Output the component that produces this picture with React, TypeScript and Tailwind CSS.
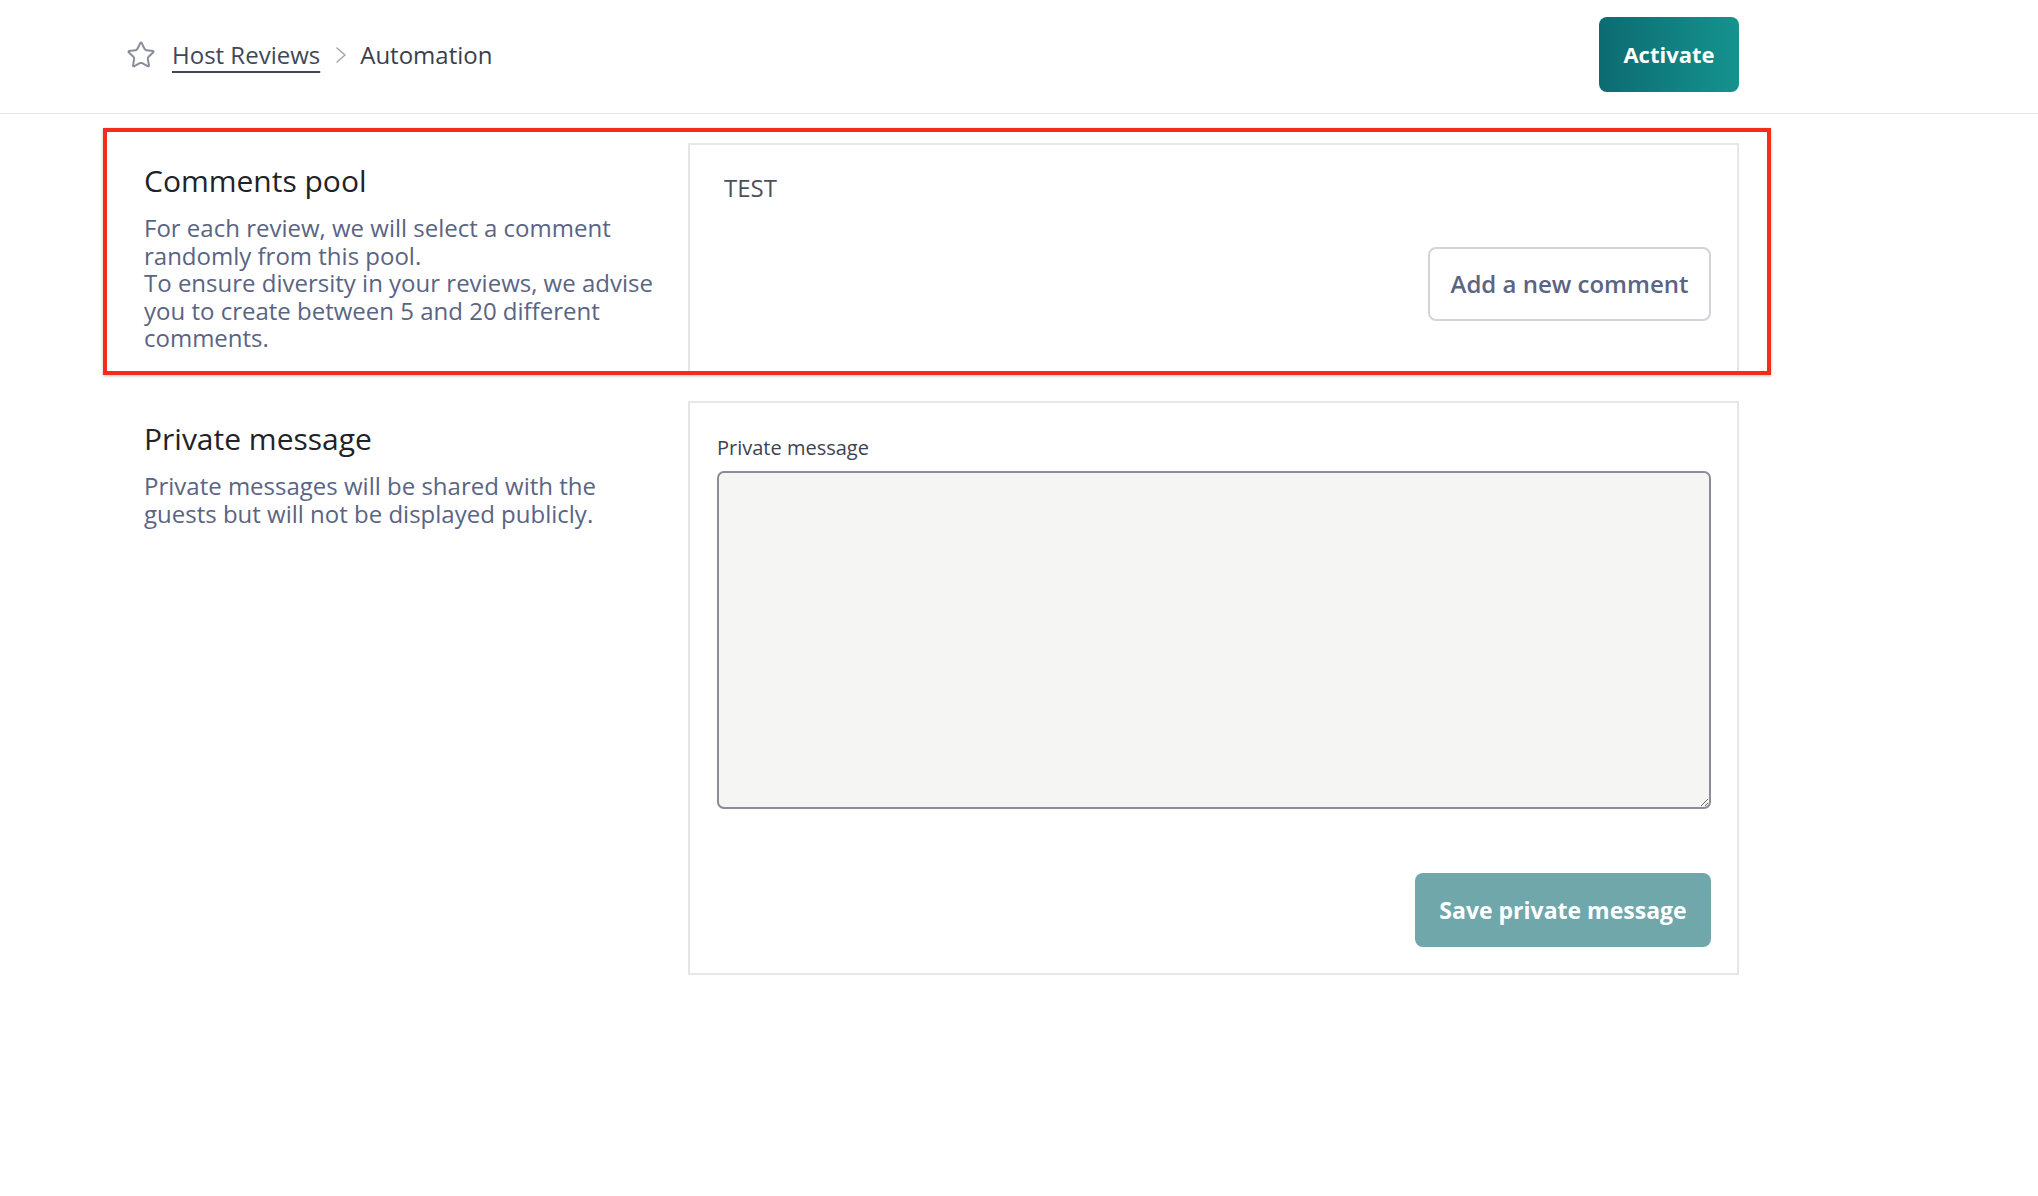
import { Star } from "lucide-react";

function Chevron() {
  return (
    <svg width="14" height="20" viewBox="0 0 14 20" fill="none" className="shrink-0">
      <polyline points="3,3 11,10 3,17" stroke="#a3a7b1" strokeWidth="1.6" strokeLinejoin="round" strokeLinecap="round" />
    </svg>
  );
}

function SectionIntro({ title, children }: { title: string; children: React.ReactNode }) {
  return (
    <div className="w-[562px] shrink-0 pl-[18px] pr-[28px] pt-[18px]">
      <h2 className="text-[30px] leading-[40px] text-[#1f2227]">{title}</h2>
      <div className="mt-[13px] text-[24px] leading-[27.5px] text-[#5a6483]">{children}</div>
    </div>
  );
}

export default function App() {
  return (
    <div className="min-h-screen bg-white font-['Open_Sans','Liberation_Sans',sans-serif]">
      <header className="h-[114px] border-b border-[#e4e4e4]">
        <div className="flex h-full w-[1739px] items-center justify-between pb-[4px] pl-[126px]">
          <nav className="flex items-center text-[24px] leading-[32px]">
            <Star size={30} strokeWidth={1.6} className="text-[#888d9a]" />
            <a href="#" className="ml-[16px] text-[#3f4758] underline decoration-[#3f4758] decoration-2 underline-offset-[7px]">
              Host Reviews
            </a>
            <span className="ml-[14px] mr-[12px] flex items-center">
              <Chevron />
            </span>
            <span className="text-[#3b3f4b]">Automation</span>
          </nav>
          <button className="h-[75px] w-[140px] rounded-[8px] bg-linear-to-r from-[#0d6b71] to-[#15938f] text-[22px] font-bold text-white">
            Activate
          </button>
        </div>
      </header>

      <main className="w-[1739px] pl-[126px] pt-[29px]">
        <section className="relative flex">
          <SectionIntro title="Comments pool">
            <p>For each review, we will select a comment randomly from this pool.</p>
            <p>To ensure diversity in your reviews, we advise you to create between 5 and 20 different comments.</p>
          </SectionIntro>
          <div className="flex-1 border-2 border-[#e6e6e6] pb-[50px] pl-[27px] pr-[26px] pt-[27px]">
            <div className="pl-[7px] text-[24px] leading-[32px] text-[#4b505d]">TEST</div>
            <div className="mt-[43px] flex justify-end">
              <button className="h-[74px] w-[283px] rounded-[8px] border-2 border-[#d3d4da] bg-white text-[24px] font-semibold text-[#5a6483]">
                Add a new comment
              </button>
            </div>
          </div>
          {/* annotation frame drawn over the first section */}
          <div className="pointer-events-none absolute -bottom-[2px] -left-[23px] -right-[32px] -top-[15px] border-4 border-[#f22e1b] shadow-[0_1px_3px_rgba(0,0,0,0.25)]" />
        </section>

        <section className="mt-[28px] flex">
          <SectionIntro title="Private message">
            <p>Private messages will be shared with the guests but will not be displayed publicly.</p>
          </SectionIntro>
          <div className="flex-1 border-2 border-[#e6e6e6] pb-[26px] pl-[27px] pr-[26px] pt-[31px]">
            <label className="block text-[20px] leading-[28px] text-[#3c4252]">Private message</label>
            <textarea className="mt-[9px] block h-[338px] w-full rounded-[7px] border-2 border-[#8a8d98] bg-[#f5f5f4] p-3 text-[20px] outline-none" />
            <div className="mt-[64px] flex justify-end">
              <button className="h-[74px] w-[296px] rounded-[8px] bg-[#6fa7ab] text-[23px] font-bold text-white">
                Save private message
              </button>
            </div>
          </div>
        </section>
      </main>
    </div>
  );
}
